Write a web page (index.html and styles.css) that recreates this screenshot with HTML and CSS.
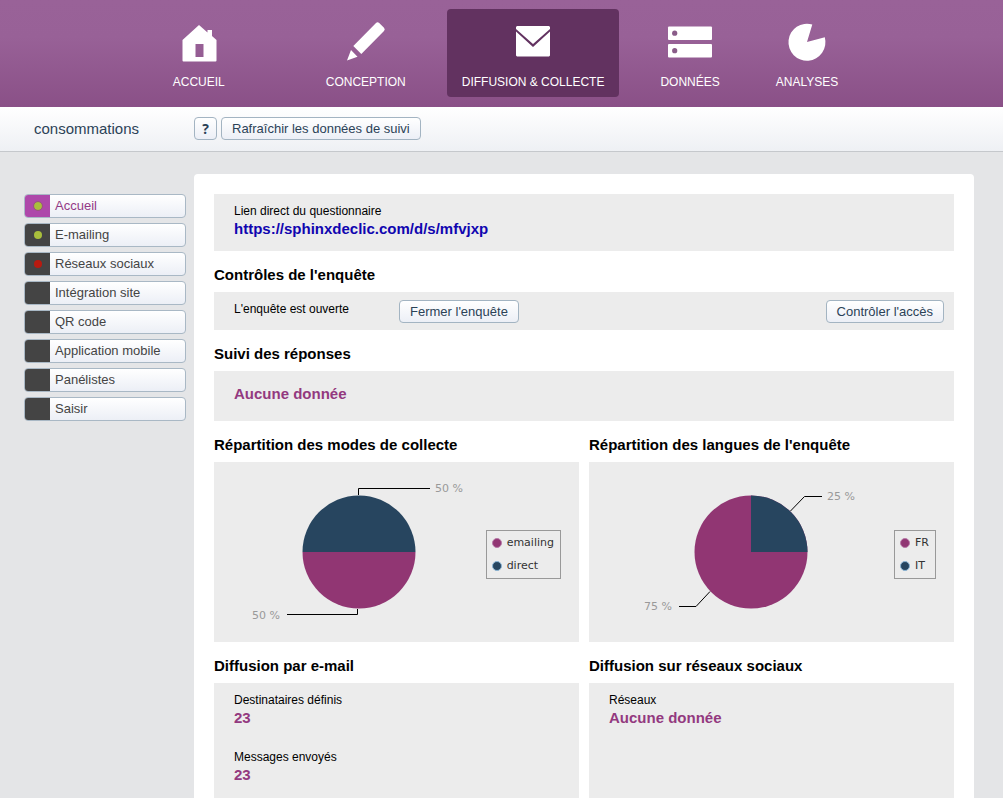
FILE: index.html
```
<!DOCTYPE html>
<html lang="fr">
<head>
<meta charset="utf-8">
<meta name="viewport" content="width=device-width, initial-scale=1">
<title>Diffusion &amp; collecte</title>
<link rel="stylesheet" href="styles.css">
</head>
<body>
<header class="topbar">
  <nav class="main-nav" aria-label="Navigation principale">
    <a class="nav-item nav-home" href="#">
      <svg class="nav-icon" viewBox="0 0 48 48" aria-hidden="true"><path fill-rule="evenodd" d="M24 7 32.500 14.500V12H37V18L41.500 22V42.500Q41.500 43.500 40.500 43.500H8.500Q7.500 43.500 7.500 42.500V22ZM20.500 26V39H28.500V26Z"/></svg>
      <span>ACCUEIL</span>
    </a>
    <a class="nav-item" href="#">
      <svg class="nav-icon" viewBox="0 0 48 48" aria-hidden="true"><path d="M5 42.500 9 32 15.500 38.800ZM11.300 28 34 5Q35.500 3.500 37.200 5L42 9.800Q43.500 11.500 42 13L19.300 36Z"/></svg>
      <span>CONCEPTION</span>
    </a>
    <a class="nav-item active" href="#" aria-current="page">
      <svg class="nav-icon" viewBox="0 0 48 48" aria-hidden="true"><path d="M8 8H40L41 9V11L24 26 7 11V9ZM7 13.500 24 29 41 13.500V37.500L40 38.500H8L7 37.500Z"/></svg>
      <span>DIFFUSION &amp; COLLECTE</span>
    </a>
    <a class="nav-item" href="#">
      <svg class="nav-icon" viewBox="0 0 48 48" aria-hidden="true"><rect x="2" y="8.500" width="44" height="13.500" rx="1"/><rect x="2" y="26" width="44" height="13.500" rx="1"/><circle class="hole" cx="8.700" cy="15.200" r="2.600"/><circle class="hole" cx="8.700" cy="32.700" r="2.600"/></svg>
      <span>DONNÉES</span>
    </a>
    <a class="nav-item" href="#">
      <svg class="nav-icon" viewBox="0 0 48 48" aria-hidden="true"><path d="M24 24 29.300 6.500A18.500 18.500 0 1 0 41.800 19.300Z"/></svg>
      <span>ANALYSES</span>
    </a>
  </nav>
</header>

<div class="toolbar">
  <div class="survey-name">consommations</div>
  <button class="btn help" type="button" aria-label="Aide">?</button>
  <button class="btn" type="button">Rafraîchir les données de suivi</button>
</div>

<div class="layout">
  <nav class="side-nav" aria-label="Diffusion">
    <a class="side-item current" href="#"><span class="marker"><i class="dot green"></i></span>Accueil</a>
    <a class="side-item" href="#"><span class="marker"><i class="dot green"></i></span>E-mailing</a>
    <a class="side-item" href="#"><span class="marker"><i class="dot red"></i></span>Réseaux sociaux</a>
    <a class="side-item" href="#"><span class="marker"></span>Intégration site</a>
    <a class="side-item" href="#"><span class="marker"></span>QR code</a>
    <a class="side-item" href="#"><span class="marker"></span>Application mobile</a>
    <a class="side-item" href="#"><span class="marker"></span>Panélistes</a>
    <a class="side-item" href="#"><span class="marker"></span>Saisir</a>
  </nav>

  <main class="panel">
    <section class="card">
      <div class="label">Lien direct du questionnaire</div>
      <a class="value link" href="#">https://sphinxdeclic.com/d/s/mfvjxp</a>
    </section>

    <section>
      <h2 class="title">Contrôles de l'enquête</h2>
      <div class="card controls">
        <div class="label status">L'enquête est ouverte</div>
        <button class="btn" type="button">Fermer l'enquête</button>
        <button class="btn access" type="button">Contrôler l'accès</button>
      </div>
    </section>

    <section>
      <h2 class="title">Suivi des réponses</h2>
      <div class="card tall"><div class="value">Aucune donnée</div></div>
    </section>

    <div class="columns">
      <section>
        <h2 class="title">Répartition des modes de collecte</h2>
        <div class="chart">
          <div class="plot">
            <svg class="pie" viewBox="0 0 240 180" role="img" aria-label="emailing 50 %, direct 50 %">
              <path class="fill-blue" d="M63.500 90A56.500 56.500 0 0 1 176.500 90Z"/>
              <path class="fill-purple" d="M63.500 90A56.500 56.500 0 0 0 176.500 90Z"/>
              <path class="leader" d="M119.500 33V26.500H191M118.500 147V152.500H48"/>
              <text class="pct" x="196" y="30">50 %</text>
              <text class="pct" x="13" y="157">50 %</text>
            </svg>
          </div>
          <ul class="legend">
            <li><i class="key purple"></i>emailing</li>
            <li><i class="key blue"></i>direct</li>
          </ul>
        </div>
      </section>
      <section>
        <h2 class="title">Répartition des langues de l'enquête</h2>
        <div class="chart">
          <div class="plot">
            <svg class="pie" viewBox="0 0 240 180" role="img" aria-label="FR 75 %, IT 25 %">
              <circle class="fill-purple" cx="120" cy="90" r="56.500"/>
              <path class="fill-blue" d="M120 90V33.500A56.500 56.500 0 0 1 176.500 90Z"/>
              <path class="leader" d="M159.500 49 173.500 34.500H191M79 129.500 65 144.500H48"/>
              <text class="pct" x="196" y="38">25 %</text>
              <text class="pct" x="13" y="148">75 %</text>
            </svg>
          </div>
          <ul class="legend">
            <li><i class="key purple"></i>FR</li>
            <li><i class="key blue"></i>IT</li>
          </ul>
        </div>
      </section>
    </div>

    <div class="columns last">
      <section>
        <h2 class="title">Diffusion par e-mail</h2>
        <div class="card">
          <div class="stat"><div class="label">Destinataires définis</div><div class="value">23</div></div>
          <div class="stat"><div class="label">Messages envoyés</div><div class="value">23</div></div>
        </div>
      </section>
      <section>
        <h2 class="title">Diffusion sur réseaux sociaux</h2>
        <div class="card">
          <div class="stat"><div class="label">Réseaux</div><div class="value">Aucune donnée</div></div>
        </div>
      </section>
    </div>
  </main>
</div>
</body>
</html>
```
FILE: styles.css
```
* { box-sizing: border-box; }

body {
  margin: 0;
  min-height: 100vh;
  display: flex;
  flex-direction: column;
  background: #e4e5e7;
  color: #000;
  font-family: "Liberation Sans", Arial, sans-serif;
  font-size: 12px;
  line-height: 18px;
}

a { color: inherit; text-decoration: none; }

.topbar {
  padding: 9px 0 10px;
  background: linear-gradient(#996298 0%, #986197 35%, #8a5087 100%);
}

.main-nav { display: flex; justify-content: center; gap: 26px; padding-left: 8px; }

.nav-item {
  display: flex;
  flex-direction: column;
  align-items: center;
  gap: 7px;
  padding: 9px 15px 6px;
  border-radius: 4px;
  color: #fff;
  font-size: 12px;
}

.nav-home { margin-right: 45px; }
.nav-item.active { background: #623260; }
.nav-icon { width: 48px; height: 48px; fill: #fff; }
.nav-icon .hole { fill: #8a5c89; }

.toolbar {
  display: flex;
  align-items: center;
  gap: 4px;
  padding: 9px 34px 10px;
  border-bottom: 1px solid #c5c8cc;
  background: linear-gradient(#fff, #eef0f4);
}

.survey-name { width: 156px; color: #2b4257; font-size: 15px; }

.btn {
  height: 23px;
  padding: 0 10px;
  border: 1px solid #a3b4c2;
  border-radius: 4px;
  background: linear-gradient(#fff, #eceff6);
  color: #2b4257;
  font: 13px/20px "Liberation Sans", Arial, sans-serif;
}

.toolbar .btn { margin: 1px 0; }
.btn.help { width: 23px; padding: 0; font-family: "Open Sans", sans-serif; font-size: 14px; font-weight: 700; }

.layout {
  flex: 1;
  display: grid;
  grid-template-columns: 162px 1fr;
  gap: 8px;
  padding: 22px 29px 0 24px;
}

.side-nav { display: flex; flex-direction: column; gap: 5px; padding-top: 20px; }

.side-item {
  display: flex;
  height: 24px;
  border: 1px solid #a9b8c5;
  border-radius: 4px;
  overflow: hidden;
  background: linear-gradient(#fff, #eceff6);
  color: #444;
  font-size: 13px;
  line-height: 21px;
}

.marker {
  display: flex;
  align-items: center;
  justify-content: center;
  width: 25px;
  margin-right: 5px;
  background: #444;
}

.current { color: #933a86; }
.current .marker { background: #ae48aa; }
.dot { width: 8px; height: 8px; border-radius: 50%; }
.dot.green { background: #a9bf3c; }
.current .dot { outline: 1px solid #965a78; }
.dot.red { background: #b81a10; }

.panel {
  display: flex;
  flex-direction: column;
  min-width: 0;
  padding: 20px 20px 0;
  border-radius: 4px 4px 0 0;
  background: #fff;
}

.title { margin: 0; padding: 14px 0 7px; font-size: 15px; line-height: 20px; }
.card { padding: 8px 20px 13px; background: #ececec; }
.card.tall { padding: 14px 20px 18px; }
.value { color: #93397f; font-size: 15px; font-weight: 700; }
.value.link { display: block; width: fit-content; color: #1005b0; }

.controls { display: flex; padding: 8px 10px 7px 20px; }
.status { width: 165px; }
.access { margin-left: auto; }

.columns { display: grid; grid-template-columns: 1fr 1fr; gap: 10px; }
.columns.last { flex: 1; }
.last section { display: flex; flex-direction: column; }
.last .card { flex: 1; }
.stat + .stat { margin-top: 21px; }

.chart { display: flex; align-items: center; padding: 0 18px; background: #ececec; }
.plot { flex: 1; display: flex; justify-content: center; }
.pie { width: 240px; height: 180px; }
.fill-blue { fill: #27455f; }
.fill-purple { fill: #913673; }
.leader { fill: none; stroke: #000; }
.pct { fill: #999; font: 11px "DejaVu Sans", Verdana, sans-serif; }

.legend {
  margin: 5px 0 0;
  padding: 0 6px 1px 5px;
  border: 1px solid #999;
  list-style: none;
  color: #333;
  font: 11px/23px "DejaVu Sans", Verdana, sans-serif;
}

.legend li { display: flex; align-items: center; gap: 5px; }
.key { width: 10px; height: 10px; border: 1px solid; border-radius: 50%; }
.key.purple { background: #913673; border-color: #b77aa8; }
.key.blue { background: #27455f; border-color: #8ab4d4; }
```
